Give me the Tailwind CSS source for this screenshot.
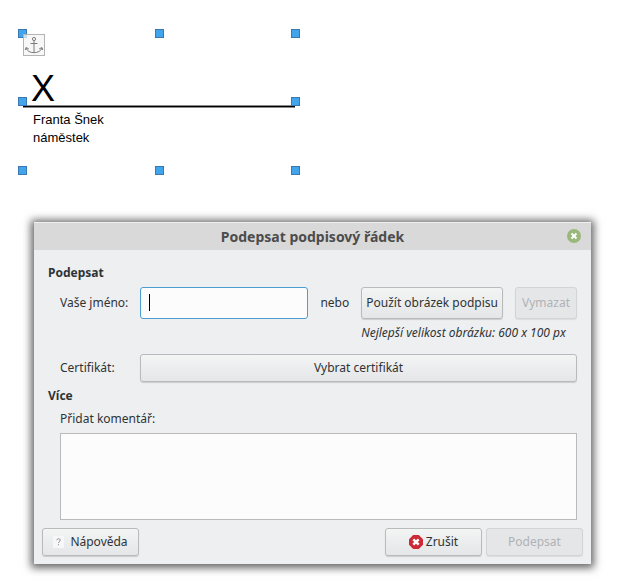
<!DOCTYPE html>
<html lang="cs" class="bg-white">
<head>
  <meta charset="UTF-8" />
  <meta name="viewport" content="width=device-width, initial-scale=1.0"/>
  <title>Podepsat podpisový řádek</title>
  <script src="https://cdn.jsdelivr.net/npm/@tailwindcss/browser@4"></script>
</head>
<body class="flow-root min-h-screen pb-6 bg-white text-xs text-[#2e3436] font-['Noto_Sans','Open_Sans',sans-serif]">

  <!-- Signature line in the document -->
  <section class="relative mt-[33px] ml-[22px] w-[274px] h-[138px] font-['Liberation_Sans',Arial,sans-serif] text-black">
    <div class="mx-px h-[74px] border-b border-black shadow-[0_1px_0_#8a8a8a,inset_0_-1px_0_#8a8a8a] flex items-end pl-2">
      <span class="text-[36px] leading-[34px]">X</span>
    </div>
    <p class="pl-[11px] pt-1 text-[13px] leading-[18px]">Franta Šnek<br />náměstek</p>

    <!-- Selection handles -->
    <span class="absolute -left-1 -top-1 size-[9px] bg-[#42a5ec] border border-[#3a78b4]"></span>
    <span class="absolute left-[133px] -top-1 size-[9px] bg-[#42a5ec] border border-[#3a78b4]"></span>
    <span class="absolute -right-1 -top-1 size-[9px] bg-[#42a5ec] border border-[#3a78b4]"></span>
    <span class="absolute -left-1 top-16 size-[9px] bg-[#42a5ec] border border-[#3a78b4]"></span>
    <span class="absolute -right-1 top-16 size-[9px] bg-[#42a5ec] border border-[#3a78b4]"></span>
    <span class="absolute -left-1 -bottom-1 size-[9px] bg-[#42a5ec] border border-[#3a78b4]"></span>
    <span class="absolute left-[133px] -bottom-1 size-[9px] bg-[#42a5ec] border border-[#3a78b4]"></span>
    <span class="absolute -right-1 -bottom-1 size-[9px] bg-[#42a5ec] border border-[#3a78b4]"></span>

    <!-- Anchor -->
    <span class="absolute left-px top-px size-[22px] bg-[#f4f4f4]/75 border border-[#b4b4b4]">
      <svg class="size-5" viewBox="0 0 20 20" fill="none" stroke="#7c7c7c" stroke-width="1">
        <circle cx="10" cy="4" r="1.600" />
        <path d="M10 5.600V17.500M6.500 8.500h7M2 13c1.200 3 4 4.700 8 4.700s6.800-1.700 8-4.700M1.300 15l.7-2.500 2.800 1.400M18.700 15l-.7-2.500-2.800 1.400" />
      </svg>
    </span>
  </section>

  <!-- Dialog -->
  <main class="mt-[51px] ml-[34px] mr-9 bg-[#eeeff0] shadow-[0_1px_8px_3px_rgba(0,0,0,0.6)]">
    <header class="relative h-7 pt-px bg-[#d9d9d9] border-t border-[#f0f0f0] flex items-center justify-center">
      <h1 class="text-sm leading-5 font-bold text-[#4c4c4c]">Podepsat podpisový řádek</h1>
      <button type="button" aria-label="Zavřít" class="absolute right-[10px] top-[6px]">
        <svg class="size-[14px] block" viewBox="0 0 14 14">
          <circle cx="7" cy="7" r="7" fill="#9ab87c" />
          <path d="M4.500 4.500l5 5M9.500 4.500l-5 5" stroke="#fff" stroke-width="1.800" />
        </svg>
      </button>
    </header>

    <form class="px-[14px] pt-[15px] pb-2">
      <h2 class="font-bold leading-4">Podepsat</h2>

      <div class="pl-3 pt-[6px] grid grid-cols-[68px_1fr_auto_auto_auto] gap-x-3 items-center">
        <label for="name" class="leading-4 whitespace-nowrap">Vaše jméno:</label>
        <div class="relative">
          <input id="name" type="text" class="block w-full h-8 px-2 bg-[#fcfcfc] border border-[#4a9fd0] rounded-[3px] outline-none" />
          <span class="absolute left-[9px] top-[7px] w-px h-[17px] bg-black"></span>
        </div>
        <span class="leading-4">nebo</span>
        <button type="button" class="h-8 px-1 leading-4 whitespace-nowrap rounded-[3px] border border-[#b8babc] bg-linear-to-b from-[#f3f4f4] to-[#e5e6e7] shadow-[0_1px_1px_rgba(0,0,0,0.15)]">Použít obrázek podpisu</button>
        <button type="button" disabled class="h-8 px-[6px] leading-4 rounded-[3px] border border-[#d2d4d5] bg-[#e5e6e8] text-[#b0b2b4] shadow-[0_1px_1px_rgba(0,0,0,0.08)]">Vymazat</button>
        <p class="col-start-4 col-span-2 pt-[6px] leading-4 italic whitespace-nowrap">Nejlepší velikost obrázku: 600 x 100 px</p>
      </div>

      <div class="pl-3 pt-[13px] grid grid-cols-[68px_1fr] gap-x-3 items-center">
        <label for="cert" class="leading-4">Certifikát:</label>
        <button id="cert" type="button" class="h-7 leading-4 rounded-[3px] border border-[#b8babc] bg-linear-to-b from-[#f3f4f4] to-[#e5e6e7] shadow-[0_1px_1px_rgba(0,0,0,0.15)]">Vybrat certifikát</button>
      </div>

      <h2 class="pt-[6px] font-bold leading-4">Více</h2>
      <div class="pl-3 pt-[7px]">
        <label for="comment" class="block leading-4">Přidat komentář:</label>
        <textarea id="comment" class="mt-[6px] block w-full h-[87px] resize-none bg-[#fcfcfc] border border-[#b8babc] outline-none"></textarea>
      </div>

      <footer class="-mx-[6px] pt-2 flex gap-1">
        <button type="button" class="mr-auto w-[97px] h-7 flex items-center justify-center gap-[6px] leading-4 rounded-[3px] border border-[#b8babc] bg-linear-to-b from-[#f3f4f4] to-[#e5e6e7] shadow-[0_1px_1px_rgba(0,0,0,0.15)]">
          <svg class="w-[11px] h-3" viewBox="0 0 11 12">
            <path d="M0 0h11v12H0z" fill="#f7f7f7" />
            <path d="M4 4.200c0-2 3.200-2 3.200 0 0 1.400-1.700 1.300-1.700 2.800M5.500 8.200v1" fill="none" stroke="#8a8a8a" />
          </svg>
          Nápověda
        </button>
        <button type="button" class="w-[97px] h-7 flex items-center justify-center gap-[3px] leading-4 rounded-[3px] border border-[#b8babc] bg-linear-to-b from-[#f3f4f4] to-[#e5e6e7] shadow-[0_1px_1px_rgba(0,0,0,0.15)]">
          <svg class="size-[14px]" viewBox="0 0 14 14">
            <path d="M4.200 0h5.600L14 4.200v5.600L9.800 14H4.200L0 9.800V4.200z" fill="#cc2b36" />
            <path d="M4.300 4.300l5.400 5.400M9.700 4.300L4.300 9.700" stroke="#fff" stroke-width="2.400" />
          </svg>
          Zrušit
        </button>
        <button type="submit" disabled class="w-[97px] h-7 leading-4 rounded-[3px] border border-[#d2d4d5] bg-[#e5e6e8] text-[#b0b2b4] shadow-[0_1px_1px_rgba(0,0,0,0.08)]">Podepsat</button>
      </footer>
    </form>
  </main>

</body>
</html>
